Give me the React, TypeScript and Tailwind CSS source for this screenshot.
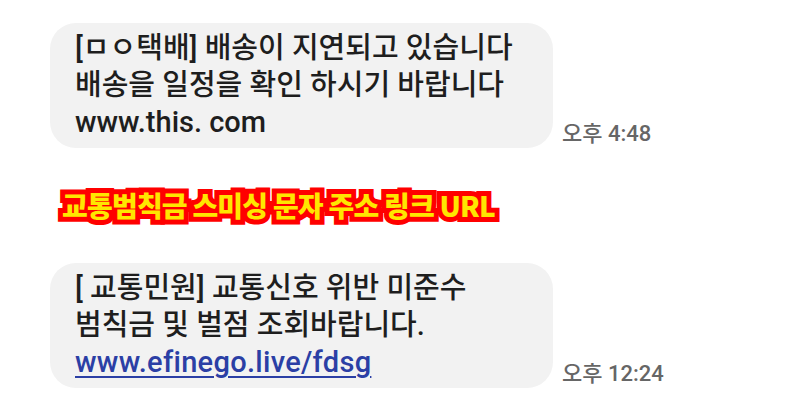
const FONT = "font-['Roboto','Noto_Sans_CJK_KR',sans-serif]";

function Bubble({ lines, time }: { lines: React.ReactNode[]; time: string }) {
  return (
    <div className="flex items-end">
      <div className="w-[503px] h-[125px] rounded-[26px] bg-[#f2f2f2] pl-[25px] pt-[7px] text-[29px] font-medium leading-[37px] text-[#1e1e1e]">
        {lines.map((l, i) => (
          <div key={i} className="whitespace-nowrap">{l}</div>
        ))}
      </div>
      <span className="ml-[9px] mb-[-1px] text-[22px] font-medium leading-[30px] text-[#666]">{time}</span>
    </div>
  );
}

export default function App() {
  return (
    <div className={`w-[800px] h-[418px] bg-white overflow-hidden pl-[50px] pt-[23px] ${FONT}`}>
      <Bubble
        lines={['[ㅁㅇ택배] 배송이 지연되고 있습니다', '배송을 일정을 확인 하시기 바랍니다', 'www.this. com']}
        time="오후 4:48"
      />

      {/* Caption */}
      <div className="h-[115px] flex items-center pl-[12px] pb-[2px]">
        <span className="font-['Noto_Sans_CJK_KR',sans-serif] font-black text-[28px] tracking-[-0.8px] text-[#ffe600] [-webkit-text-stroke:10px_#ff0000] [paint-order:stroke_fill]">
          교통범칙금 스미싱 문자 주소 링크 URL
        </span>
      </div>

      <Bubble
        lines={[
          '[ 교통민원] 교통신호 위반 미준수',
          '범칙금 및 벌점 조회바랍니다.',
          <span className="text-[#2b3fa5] tracking-[0.3px] underline decoration-[2px] underline-offset-[4px]">www.efinego.live/fdsg</span>,
        ]}
        time="오후 12:24"
      />
    </div>
  );
}
